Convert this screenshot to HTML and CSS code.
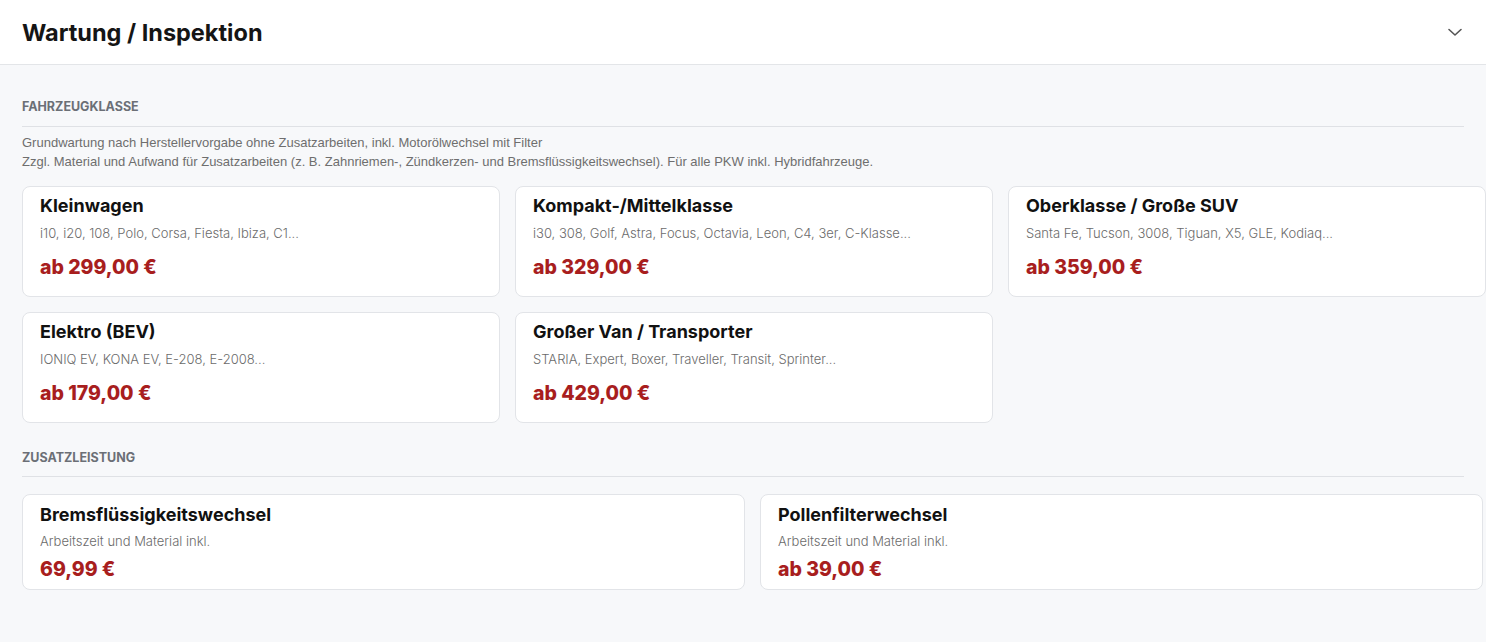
FILE: index.html
```html
<!DOCTYPE html>
<html lang="de">
<head>
    <meta charset="UTF-8">
    <meta name="viewport" content="width=device-width, initial-scale=1.0">
    <title>Wartung / Inspektion</title>
    <link rel="stylesheet" href="styles.css">
</head>
<body>
    <div class="panel">
        <div class="panel-head">
            <h2 class="panel-title">Wartung / Inspektion</h2>
            <svg class="panel-toggle" width="16" height="16" viewBox="0 0 16 16" fill="none">
                <path d="M2 5.5l6 5.5 6-5.5" stroke="#555" stroke-width="1.6" stroke-linecap="round" stroke-linejoin="round"/>
            </svg>
        </div>

        <div class="panel-body">
            <h3 class="group-title">Fahrzeugklasse</h3>
            <p class="group-note">
                Grundwartung nach Herstellervorgabe ohne Zusatzarbeiten, inkl. Motorölwechsel mit Filter<br>
                Zzgl. Material und Aufwand für Zusatzarbeiten (z. B. Zahnriemen-, Zündkerzen- und Bremsflüssigkeitswechsel). Für alle PKW inkl. Hybridfahrzeuge.
            </p>

            <div class="price-grid cols-3">
                <div class="price-card">
                    <div class="card-name">Kleinwagen</div>
                    <div class="card-info">i10, i20, 108, Polo, Corsa, Fiesta, Ibiza, C1...</div>
                    <div class="card-price">ab 299,00 €</div>
                </div>
                <div class="price-card">
                    <div class="card-name">Kompakt-/Mittelklasse</div>
                    <div class="card-info">i30, 308, Golf, Astra, Focus, Octavia, Leon, C4, 3er, C-Klasse...</div>
                    <div class="card-price">ab 329,00 €</div>
                </div>
                <div class="price-card">
                    <div class="card-name">Oberklasse / Große SUV</div>
                    <div class="card-info">Santa Fe, Tucson, 3008, Tiguan, X5, GLE, Kodiaq...</div>
                    <div class="card-price">ab 359,00 €</div>
                </div>
                <div class="price-card">
                    <div class="card-name">Elektro (BEV)</div>
                    <div class="card-info">IONIQ EV, KONA EV, E-208, E-2008...</div>
                    <div class="card-price">ab 179,00 €</div>
                </div>
                <div class="price-card">
                    <div class="card-name">Großer Van / Transporter</div>
                    <div class="card-info">STARIA, Expert, Boxer, Traveller, Transit, Sprinter...</div>
                    <div class="card-price">ab 429,00 €</div>
                </div>
            </div>

            <h3 class="group-title extra">Zusatzleistung</h3>

            <div class="price-grid cols-2">
                <div class="price-card compact">
                    <div class="card-name">Bremsflüssigkeitswechsel</div>
                    <div class="card-info">Arbeitszeit und Material inkl.</div>
                    <div class="card-price">69,99 €</div>
                </div>
                <div class="price-card compact">
                    <div class="card-name">Pollenfilterwechsel</div>
                    <div class="card-info">Arbeitszeit und Material inkl.</div>
                    <div class="card-price">ab 39,00 €</div>
                </div>
            </div>
        </div>
    </div>
</body>
</html>
```

FILE: styles.css
```css
body {
    margin: 0;
    font-family: 'Inter', 'Noto Sans', sans-serif;
    background: #f7f8fa;
    color: #111;
}

.panel-head {
    height: 64px;
    display: flex;
    align-items: center;
    justify-content: space-between;
    padding: 0 22px;
    background: #fff;
    border-bottom: 1px solid #e3e5e8;
}

.panel-title {
    margin: 0;
    font-size: 23.5px;
    font-weight: 700;
    color: #151515;
}

.panel-toggle {
    margin-right: 1px;
}

.panel-body {
    padding: 32px 22px 40px;
    background: #f7f8fa;
    min-height: 513px;
    box-sizing: border-box;
}

.group-title {
    margin: 0;
    padding-bottom: 9px;
    border-bottom: 1px solid #dfe1e5;
    font-size: 12.5px;
    line-height: 20px;
    font-weight: 700;
    color: #6b6f76;
    text-transform: uppercase;
}

.group-title.extra {
    margin-top: 25px;
    padding-bottom: 8px;
}

.group-note {
    margin: 6px 0 15px;
    font-family: 'Liberation Sans', Arial, sans-serif;
    font-size: 13px;
    line-height: 19px;
    color: #6e6e6e;
}

.price-grid {
    display: grid;
    gap: 15px;
}

.price-grid.cols-3 {
    grid-template-columns: repeat(3, 478px);
}

.price-grid.cols-2 {
    grid-template-columns: repeat(2, 723px);
    margin-top: 17px;
}

.price-card {
    background: #fff;
    border: 1px solid #e2e4e8;
    border-radius: 8px;
    padding: 8px 17px 15px;
}

.card-name {
    font-size: 18px;
    line-height: 22px;
    font-weight: 700;
    color: #111;
}

.card-info {
    margin-top: 6px;
    font-size: 13px;
    line-height: 20px;
    font-weight: 300;
    color: #6b6b6b;
}

.card-price {
    margin-top: 10px;
    font-size: 19.5px;
    line-height: 28px;
    font-weight: 800;
    color: #a81e1e;
}

.price-card.compact {
    padding-top: 9px;
    padding-bottom: 6px;
}

.price-card.compact .card-info {
    margin-top: 5px;
}

.price-card.compact .card-price {
    margin-top: 4px;
}
```
